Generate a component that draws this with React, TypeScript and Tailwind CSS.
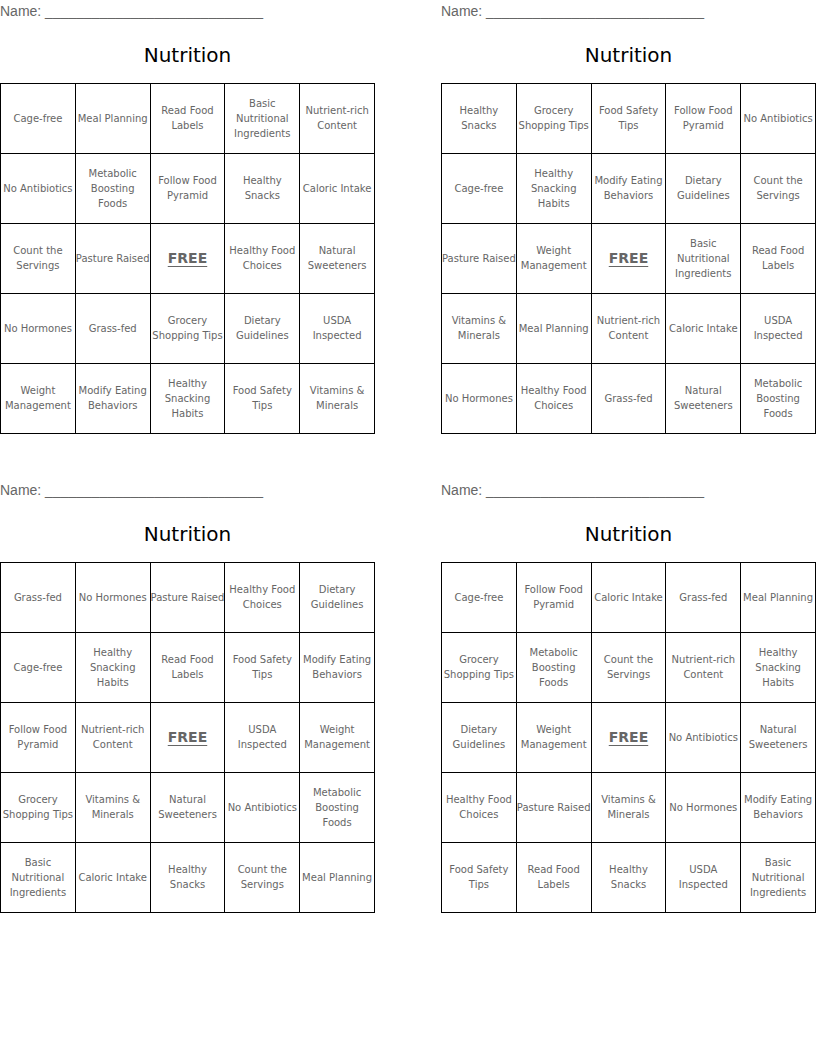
const cards: string[][][] = [
  [
    ["Cage-free", "Meal Planning", "Read Food\nLabels", "Basic\nNutritional\nIngredients", "Nutrient-rich\nContent"],
    ["No Antibiotics", "Metabolic\nBoosting\nFoods", "Follow Food\nPyramid", "Healthy\nSnacks", "Caloric Intake"],
    ["Count the\nServings", "Pasture Raised", "FREE", "Healthy Food\nChoices", "Natural\nSweeteners"],
    ["No Hormones", "Grass-fed", "Grocery\nShopping Tips", "Dietary\nGuidelines", "USDA\nInspected"],
    ["Weight\nManagement", "Modify Eating\nBehaviors", "Healthy\nSnacking\nHabits", "Food Safety\nTips", "Vitamins &\nMinerals"],
  ],
  [
    ["Healthy\nSnacks", "Grocery\nShopping Tips", "Food Safety\nTips", "Follow Food\nPyramid", "No Antibiotics"],
    ["Cage-free", "Healthy\nSnacking\nHabits", "Modify Eating\nBehaviors", "Dietary\nGuidelines", "Count the\nServings"],
    ["Pasture Raised", "Weight\nManagement", "FREE", "Basic\nNutritional\nIngredients", "Read Food\nLabels"],
    ["Vitamins &\nMinerals", "Meal Planning", "Nutrient-rich\nContent", "Caloric Intake", "USDA\nInspected"],
    ["No Hormones", "Healthy Food\nChoices", "Grass-fed", "Natural\nSweeteners", "Metabolic\nBoosting\nFoods"],
  ],
  [
    ["Grass-fed", "No Hormones", "Pasture Raised", "Healthy Food\nChoices", "Dietary\nGuidelines"],
    ["Cage-free", "Healthy\nSnacking\nHabits", "Read Food\nLabels", "Food Safety\nTips", "Modify Eating\nBehaviors"],
    ["Follow Food\nPyramid", "Nutrient-rich\nContent", "FREE", "USDA\nInspected", "Weight\nManagement"],
    ["Grocery\nShopping Tips", "Vitamins &\nMinerals", "Natural\nSweeteners", "No Antibiotics", "Metabolic\nBoosting\nFoods"],
    ["Basic\nNutritional\nIngredients", "Caloric Intake", "Healthy\nSnacks", "Count the\nServings", "Meal Planning"],
  ],
  [
    ["Cage-free", "Follow Food\nPyramid", "Caloric Intake", "Grass-fed", "Meal Planning"],
    ["Grocery\nShopping Tips", "Metabolic\nBoosting\nFoods", "Count the\nServings", "Nutrient-rich\nContent", "Healthy\nSnacking\nHabits"],
    ["Dietary\nGuidelines", "Weight\nManagement", "FREE", "No Antibiotics", "Natural\nSweeteners"],
    ["Healthy Food\nChoices", "Pasture Raised", "Vitamins &\nMinerals", "No Hormones", "Modify Eating\nBehaviors"],
    ["Food Safety\nTips", "Read Food\nLabels", "Healthy\nSnacks", "USDA\nInspected", "Basic\nNutritional\nIngredients"],
  ],
];

function Cell({ text }: { text: string }) {
  if (text === "FREE") {
    return (
      <div className="h-[70px] border-r border-b border-black flex items-center justify-center pb-[1px]">
        <span className="text-[14px] font-bold underline underline-offset-[3px] text-[#666]">FREE</span>
      </div>
    );
  }
  return (
    <div className="h-[70px] border-r border-b border-black flex flex-col items-center justify-center pb-[1px] text-center text-[10px] leading-[15px] text-[#666] whitespace-nowrap">
      {text.split("\n").map((line, i) => (
        <span key={i}>{line}</span>
      ))}
    </div>
  );
}

function Card({ grid }: { grid: string[][] }) {
  return (
    <div className="w-[375px]">
      <div className="h-[22px] leading-[22px] text-[14px] text-[#666] font-['Liberation_Sans',sans-serif]">
        Name: ____________________________
      </div>
      <h1 className="mt-[22px] h-[22px] leading-[22px] text-[20px] text-center text-black">Nutrition</h1>
      <div className="mt-[17px] grid grid-cols-5 border-t border-l border-black">
        {grid.flat().map((t, i) => (
          <Cell key={i} text={t} />
        ))}
      </div>
    </div>
  );
}

export default function App() {
  return (
    <div className="w-[816px] h-[1056px] bg-white font-['DejaVu_Sans',sans-serif]">
      <div className="grid grid-cols-[375px_375px] gap-x-[66px] gap-y-[45px]">
        {cards.map((g, i) => (
          <Card key={i} grid={g} />
        ))}
      </div>
    </div>
  );
}
